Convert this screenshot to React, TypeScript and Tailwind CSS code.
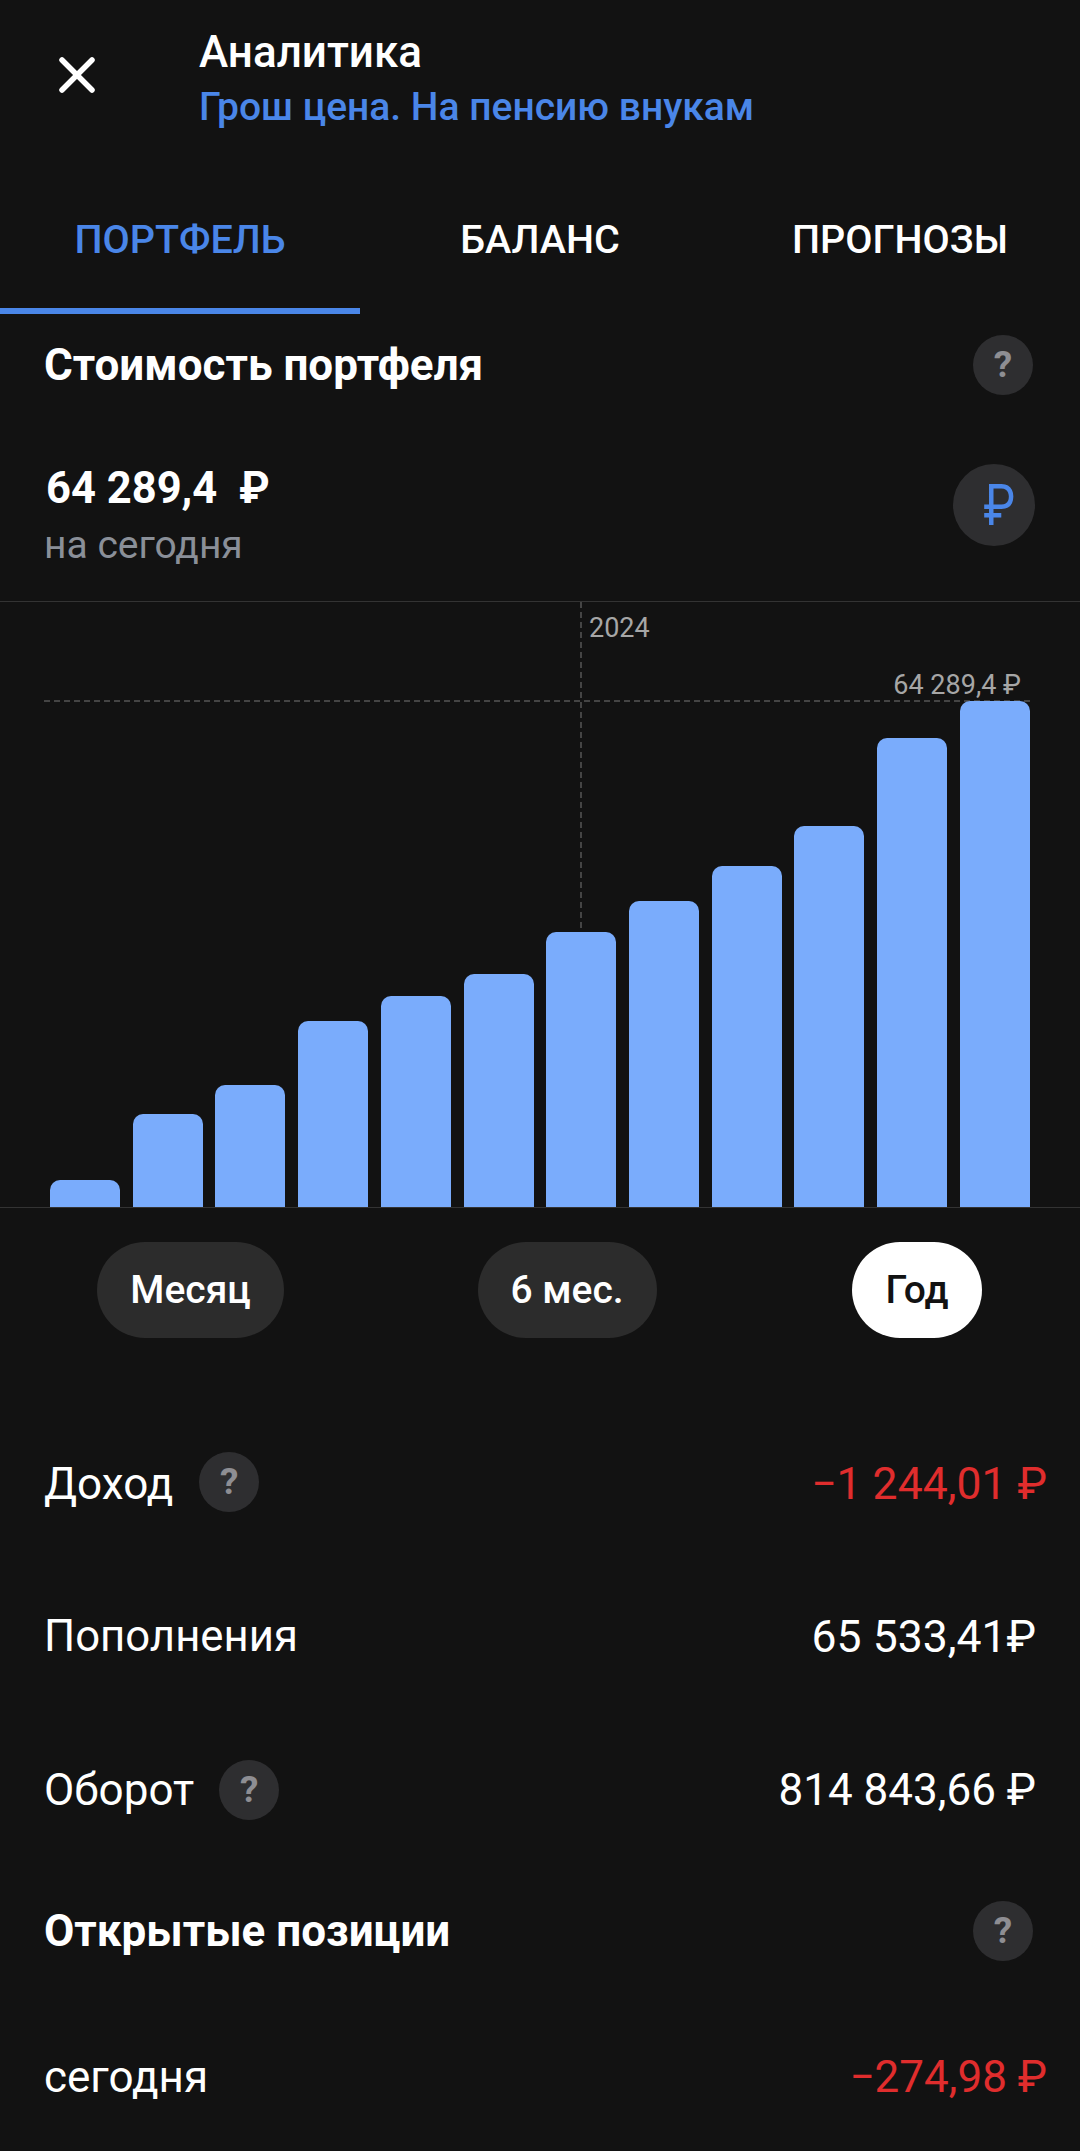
import { X } from 'lucide-react';

const bars = [27, 93, 122, 186, 211, 233, 275, 306, 341, 381, 469, 506];

const Help = ({ className = '' }: { className?: string }) => (
  <div
    className={`flex h-[60px] w-[60px] items-center justify-center rounded-full bg-[#2e2e30] text-[37px] font-bold text-[#8e8e93] ${className}`}
  >
    ?
  </div>
);

const App = () => {
  return (
    <div className="h-[2151px] w-[1080px] overflow-hidden bg-[#121212] font-['Roboto',sans-serif] text-white">
      <header className="flex h-[190px] items-start">
        <div className="flex h-[150px] w-[154px] items-center justify-center">
          <X className="h-[60px] w-[60px]" strokeWidth={2.2} />
        </div>
        <div className="ml-[45px] pt-[26px]">
          <p className="text-[44px] font-medium leading-[52px]">Аналитика</p>
          <p className="text-[39px] font-medium leading-[58px] text-[#4a86e8]">
            Грош цена. На пенсию внукам
          </p>
        </div>
      </header>

      <nav className="grid h-[124px] grid-cols-3 text-[39.5px] font-medium">
        <div className="flex items-start justify-center border-b-[6px] border-[#4a86e8] pt-[20px] text-[#4a86e8]">
          ПОРТФЕЛЬ
        </div>
        <div className="flex items-start justify-center pt-[20px]">БАЛАНС</div>
        <div className="flex items-start justify-center pt-[20px]">ПРОГНОЗЫ</div>
      </nav>

      <section className="flex h-[102px] items-center justify-between pl-[44px] pr-[47px]">
        <h2 className="text-[44px] font-bold">Стоимость портфеля</h2>
        <Help />
      </section>

      <section className="flex h-[185px] items-start justify-between pl-[44px] pr-[45px] pt-[47px]">
        <div>
          <p className="pl-[2px] text-[43.5px] font-bold leading-[52px]">64 289,4&nbsp; ₽</p>
          <p className="mt-[5px] text-[39px] leading-[50px] text-[#8a8f98]">на сегодня</p>
        </div>
        <div className="mt-[1px] flex h-[82px] w-[82px] items-center justify-center rounded-full bg-[#2e2e30] text-[58px] text-[#4a86e8]">
          <span className="translate-x-[5px] scale-x-[0.82]">₽</span>
        </div>
      </section>

      <section className="relative h-[607px] border-y border-[#333333]">
        <div className="absolute left-[580px] top-0 h-[331px] w-[2px] bg-[repeating-linear-gradient(180deg,#444444_0_6px,transparent_6px_10px)]" />
        <div className="absolute left-[44px] top-[98px] h-[2px] w-[986px] bg-[repeating-linear-gradient(90deg,#444444_0_6px,transparent_6px_10px)]" />
        <span className="absolute left-[589px] top-[8px] text-[27px] leading-[36px] text-[#a6a6a6]">
          2024
        </span>
        <span className="absolute right-[59px] top-[65px] text-[27px] leading-[36px] text-[#a6a6a6]">
          64 289,4 ₽
        </span>
        <div className="absolute bottom-0 left-[50px] flex w-[980px] items-end justify-between">
          {bars.map((h, i) => (
            <div
              key={i}
              className="w-[70px] rounded-t-[10px] bg-[#7aacfc]"
              style={{ height: h }}
            />
          ))}
        </div>
      </section>

      <section className="flex justify-between pl-[97px] pr-[98px] pt-[34px] text-[39px] font-medium">
        <button className="h-[96px] w-[187px] rounded-full bg-[#2c2c2c]">Месяц</button>
        <button className="-ml-[2px] h-[96px] w-[179px] rounded-full bg-[#2c2c2c]">6 мес.</button>
        <button className="h-[96px] w-[130px] rounded-full bg-white text-[#121212]">Год</button>
      </section>

      <section className="pl-[44px] text-[44px]">
        <div className="mt-[101px] flex h-[90px] items-center justify-between pr-[33px]">
          <div className="flex items-center">
            <span>Доход</span>
            <Help className="ml-[26px] -mt-[4px]" />
          </div>
          <span className="text-[44.5px] text-[#e02d2d]">−1 244,01 ₽</span>
        </div>
        <div className="mt-[63px] flex h-[90px] items-center justify-between pr-[44px]">
          <span className="text-[43.7px]">Пополнения</span>
          <span className="text-[44.5px]">65 533,41₽</span>
        </div>
        <div className="mt-[63px] flex h-[90px] items-center justify-between pr-[44px]">
          <div className="flex items-center">
            <span>Оборот</span>
            <Help className="ml-[25px]" />
          </div>
          <span>814 843,66 ₽</span>
        </div>
        <div className="mt-[51px] flex h-[90px] items-center justify-between pr-[47px] font-bold">
          <h2>Открытые позиции</h2>
          <Help />
        </div>
        <div className="mt-[56px] flex h-[90px] items-center justify-between pr-[33px]">
          <span>сегодня</span>
          <span className="text-[#e02d2d]">−274,98 ₽</span>
        </div>
      </section>
    </div>
  );
};

export default App;
